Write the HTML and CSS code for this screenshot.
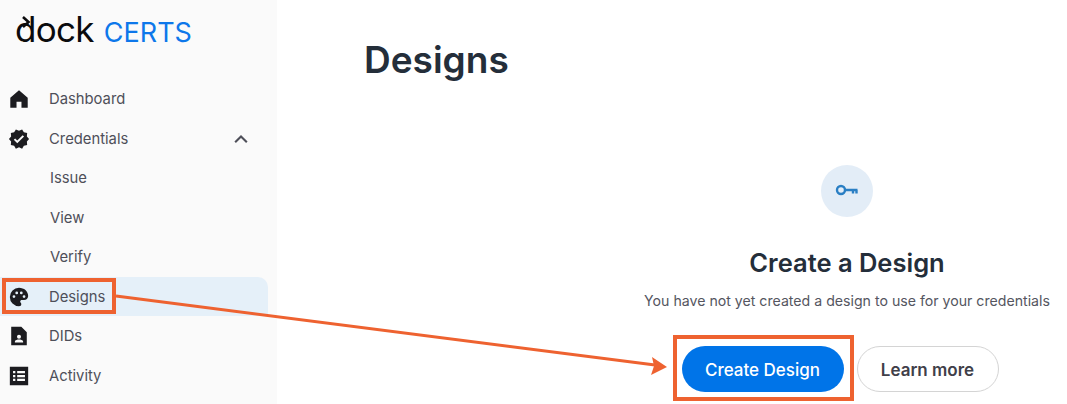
FILE: index.html
```html
<!DOCTYPE html>
<html lang="en">
<head>
  <meta charset="UTF-8">
  <title>Dock Certs - Designs</title>
  <link rel="stylesheet" href="styles.css">
</head>
<body>
  <div class="container">
    <!-- Sidebar -->
    <aside class="sidebar">
      <div class="logo">
        <span class="logo-dock">dock</span>
        <span class="logo-certs">CERTS</span>
        <svg class="logo-arrow" viewBox="0 0 12 14"><path d="M3 2 8.500 7 3 12"/></svg>
      </div>
      <nav class="nav">
        <a class="nav-item">
          <svg class="nav-icon" viewBox="0 0 24 24"><path d="M12 2.500 2.500 10.500V21.500h6.800v-6.500h5.400v6.500h6.800V10.500z"/></svg>
          <span>Dashboard</span>
        </a>
        <a class="nav-item">
          <svg class="nav-icon" viewBox="0 0 24 24"><path fill-rule="evenodd" d="M23 12l-2.400-2.800.3-3.700-3.600-.8L15.400 1.500 12 3 8.600 1.500 6.700 4.700l-3.600.8.300 3.700L1 12l2.400 2.800-.3 3.700 3.600.8 1.900 3.200L12 21l3.400 1.500 1.900-3.200 3.600-.8-.3-3.700zM10.100 16.700 6.300 12.900l1.500-1.500 2.300 2.300 5.900-5.900 1.500 1.500z"/></svg>
          <span>Credentials</span>
          <svg class="nav-chevron" viewBox="0 0 24 24"><path d="M5 16l7-7 7 7" /></svg>
        </a>
        <a class="nav-item sub">Issue</a>
        <a class="nav-item sub">View</a>
        <a class="nav-item sub">Verify</a>
        <a class="nav-item active">
          <svg class="nav-icon" viewBox="0 0 24 24"><path fill-rule="evenodd" d="M12 2a10 10 0 0 0 0 20c1.700 0 2.500-1 2.500-2.200 0-.6-.3-1.100-.6-1.500-.3-.4-.6-.8-.6-1.300 0-1 .8-1.700 1.800-1.700H17.500c2.500 0 4.500-2 4.500-4.500C22 5.900 17.500 2 12 2zM6.500 13a1.500 1.500 0 1 1 0-3 1.500 1.500 0 0 1 0 3zm3-4a1.500 1.500 0 1 1 0-3 1.500 1.500 0 0 1 0 3zm5 0a1.500 1.500 0 1 1 0-3 1.500 1.500 0 0 1 0 3zm3 4a1.500 1.500 0 1 1 0-3 1.500 1.500 0 0 1 0 3z"/></svg>
          <span>Designs</span>
        </a>
        <a class="nav-item">
          <svg class="nav-icon" viewBox="0 0 24 24"><path fill-rule="evenodd" d="M3.500 2H14.500l6 6V22h-17zM12 10.500a2.200 2.200 0 1 0 0 4.400 2.200 2.200 0 0 0 0-4.400zM7.500 19h9v-1c0-1.500-3-2.200-4.500-2.200S7.500 16.500 7.500 18z"/></svg>
          <span>DIDs</span>
        </a>
        <a class="nav-item">
          <svg class="nav-icon" viewBox="0 0 24 24"><path fill-rule="evenodd" d="M2 2h20v20H2zM5.500 6.500v2.500h2.500V6.500zm4.500 0v2.500h8.500V6.500zm-4.500 4.300v2.500h2.500v-2.500zm4.500 0v2.500h8.500v-2.500zm-4.500 4.200v2.500h2.500V15zm4.500 0v2.500h8.500V15z"/></svg>
          <span>Activity</span>
        </a>
      </nav>
    </aside>

    <!-- Main content -->
    <main class="main">
      <h1 class="page-title">Designs</h1>
      <div class="empty">
        <div class="empty-icon">
          <svg viewBox="0 0 24 24"><circle cx="6" cy="11" r="4"/><path d="M10 11H22.500M18 11v3.500M21.500 11v3.500"/></svg>
        </div>
        <h2>Create a Design</h2>
        <p>You have not yet created a design to use for your credentials</p>
        <div class="actions">
          <button class="btn btn-primary">Create Design</button>
          <button class="btn btn-outline">Learn more</button>
        </div>
      </div>
    </main>

    <!-- Annotation on top of the screenshot -->
    <div class="mark mark-nav"></div>
    <div class="mark mark-btn"></div>
    <svg class="arrow" width="1067" height="404" viewBox="0 0 1067 404">
      <path d="M116 296 655 365" stroke="#ee6230" stroke-width="3" fill="none"/>
      <path d="M667 367 652 357 654 366 651 375z" fill="#ee6230"/>
    </svg>
  </div>
</body>
</html>
```

FILE: styles.css
```css
/* Body and global layout */
body {
  font-family: 'Inter', sans-serif;
  background: white;
  margin: 0;
  height: 404px;
  overflow: hidden;
}

.container {
  position: relative;
  display: flex;
  height: 100%;
}

/* Sidebar */
.sidebar {
  width: 277px;
  flex-shrink: 0;
  background: #fafafa;
}

.logo {
  position: relative;
  display: flex;
  align-items: baseline;
  gap: 10px;
  height: 79.400px;
  padding-left: 15px;
  box-sizing: border-box;
  padding-top: 9px;
}

.logo-dock {
  font-size: 35px;
  line-height: 40px;
  letter-spacing: -0.7px;
  color: #0b0b0d;
}

.logo-certs {
  font-size: 27px;
  color: #0d77ea;
}

/* Arrow head on the d of the logo */
.logo-arrow {
  position: absolute;
  left: 20px;
  top: 15px;
  width: 12px;
  height: 14px;
  fill: none;
  stroke: #0b0b0d;
  stroke-width: 2.600;
}

.nav {
  display: flex;
  flex-direction: column;
}

.nav-item {
  display: flex;
  align-items: center;
  height: 39.500px;
  width: 268px;
  padding-left: 8px;
  box-sizing: border-box;
  font-size: 14.800px;
  color: #4e4f59;
}

.nav-item.sub {
  padding-left: 50px;
}

.nav-item.active {
  background: #e5f0f9;
  border-top-right-radius: 10px;
}

.nav-icon {
  width: 22px;
  height: 22px;
  margin-right: 19px;
  fill: #1c1c20;
}

.nav-chevron {
  width: 20px;
  height: 20px;
  margin-left: auto;
  margin-right: 17px;
  fill: none;
  stroke: #4e4f59;
  stroke-width: 2.500;
}

/* Main content */
.main {
  flex: 1;
  display: flex;
  flex-direction: column;
  padding-left: 87px;
}

.page-title {
  margin: 36px 0 0;
  font-size: 37px;
  line-height: 48px;
  font-weight: 600;
  color: #242e3a;
}

.empty {
  align-self: flex-end;
  width: 440px;
  margin-top: 81px;
  display: flex;
  flex-direction: column;
  align-items: center;
}

.empty-icon {
  width: 52px;
  height: 52px;
  border-radius: 50%;
  background: #e3edf7;
  display: flex;
  justify-content: center;
  align-items: center;
}

.empty-icon svg {
  width: 24px;
  height: 24px;
  fill: none;
  stroke: #2a7fc4;
  stroke-width: 2.400;
}

.empty h2 {
  margin: 29px 0 0;
  font-size: 25.500px;
  line-height: 34px;
  font-weight: 600;
  color: #242e3a;
}

.empty p {
  margin: 11px 0 0;
  font-size: 14.150px;
  line-height: 20px;
  color: #55565f;
}

.actions {
  display: flex;
  gap: 13px;
  margin: 35px 14px 0 0;
}

.btn {
  height: 46px;
  border-radius: 23px;
  font-family: inherit;
  font-size: 17px;
  padding: 2px 0 0;
}

.btn-primary {
  width: 162px;
  border: none;
  background: #0074e8;
  color: white;
  font-weight: 500;
}

.btn-outline {
  width: 142px;
  border: 1px solid #d4d4d4;
  background: white;
  color: #3f4049;
  font-weight: 600;
}

/* Orange annotation boxes */
.mark {
  position: absolute;
  border: 4px solid #ee6230;
  box-sizing: border-box;
}

.mark-nav {
  left: 2px;
  top: 278px;
  width: 114px;
  height: 36px;
}

.mark-btn {
  left: 673px;
  top: 335px;
  width: 181px;
  height: 66px;
}

.arrow {
  position: absolute;
  left: 0;
  top: 0;
  pointer-events: none;
}
```
